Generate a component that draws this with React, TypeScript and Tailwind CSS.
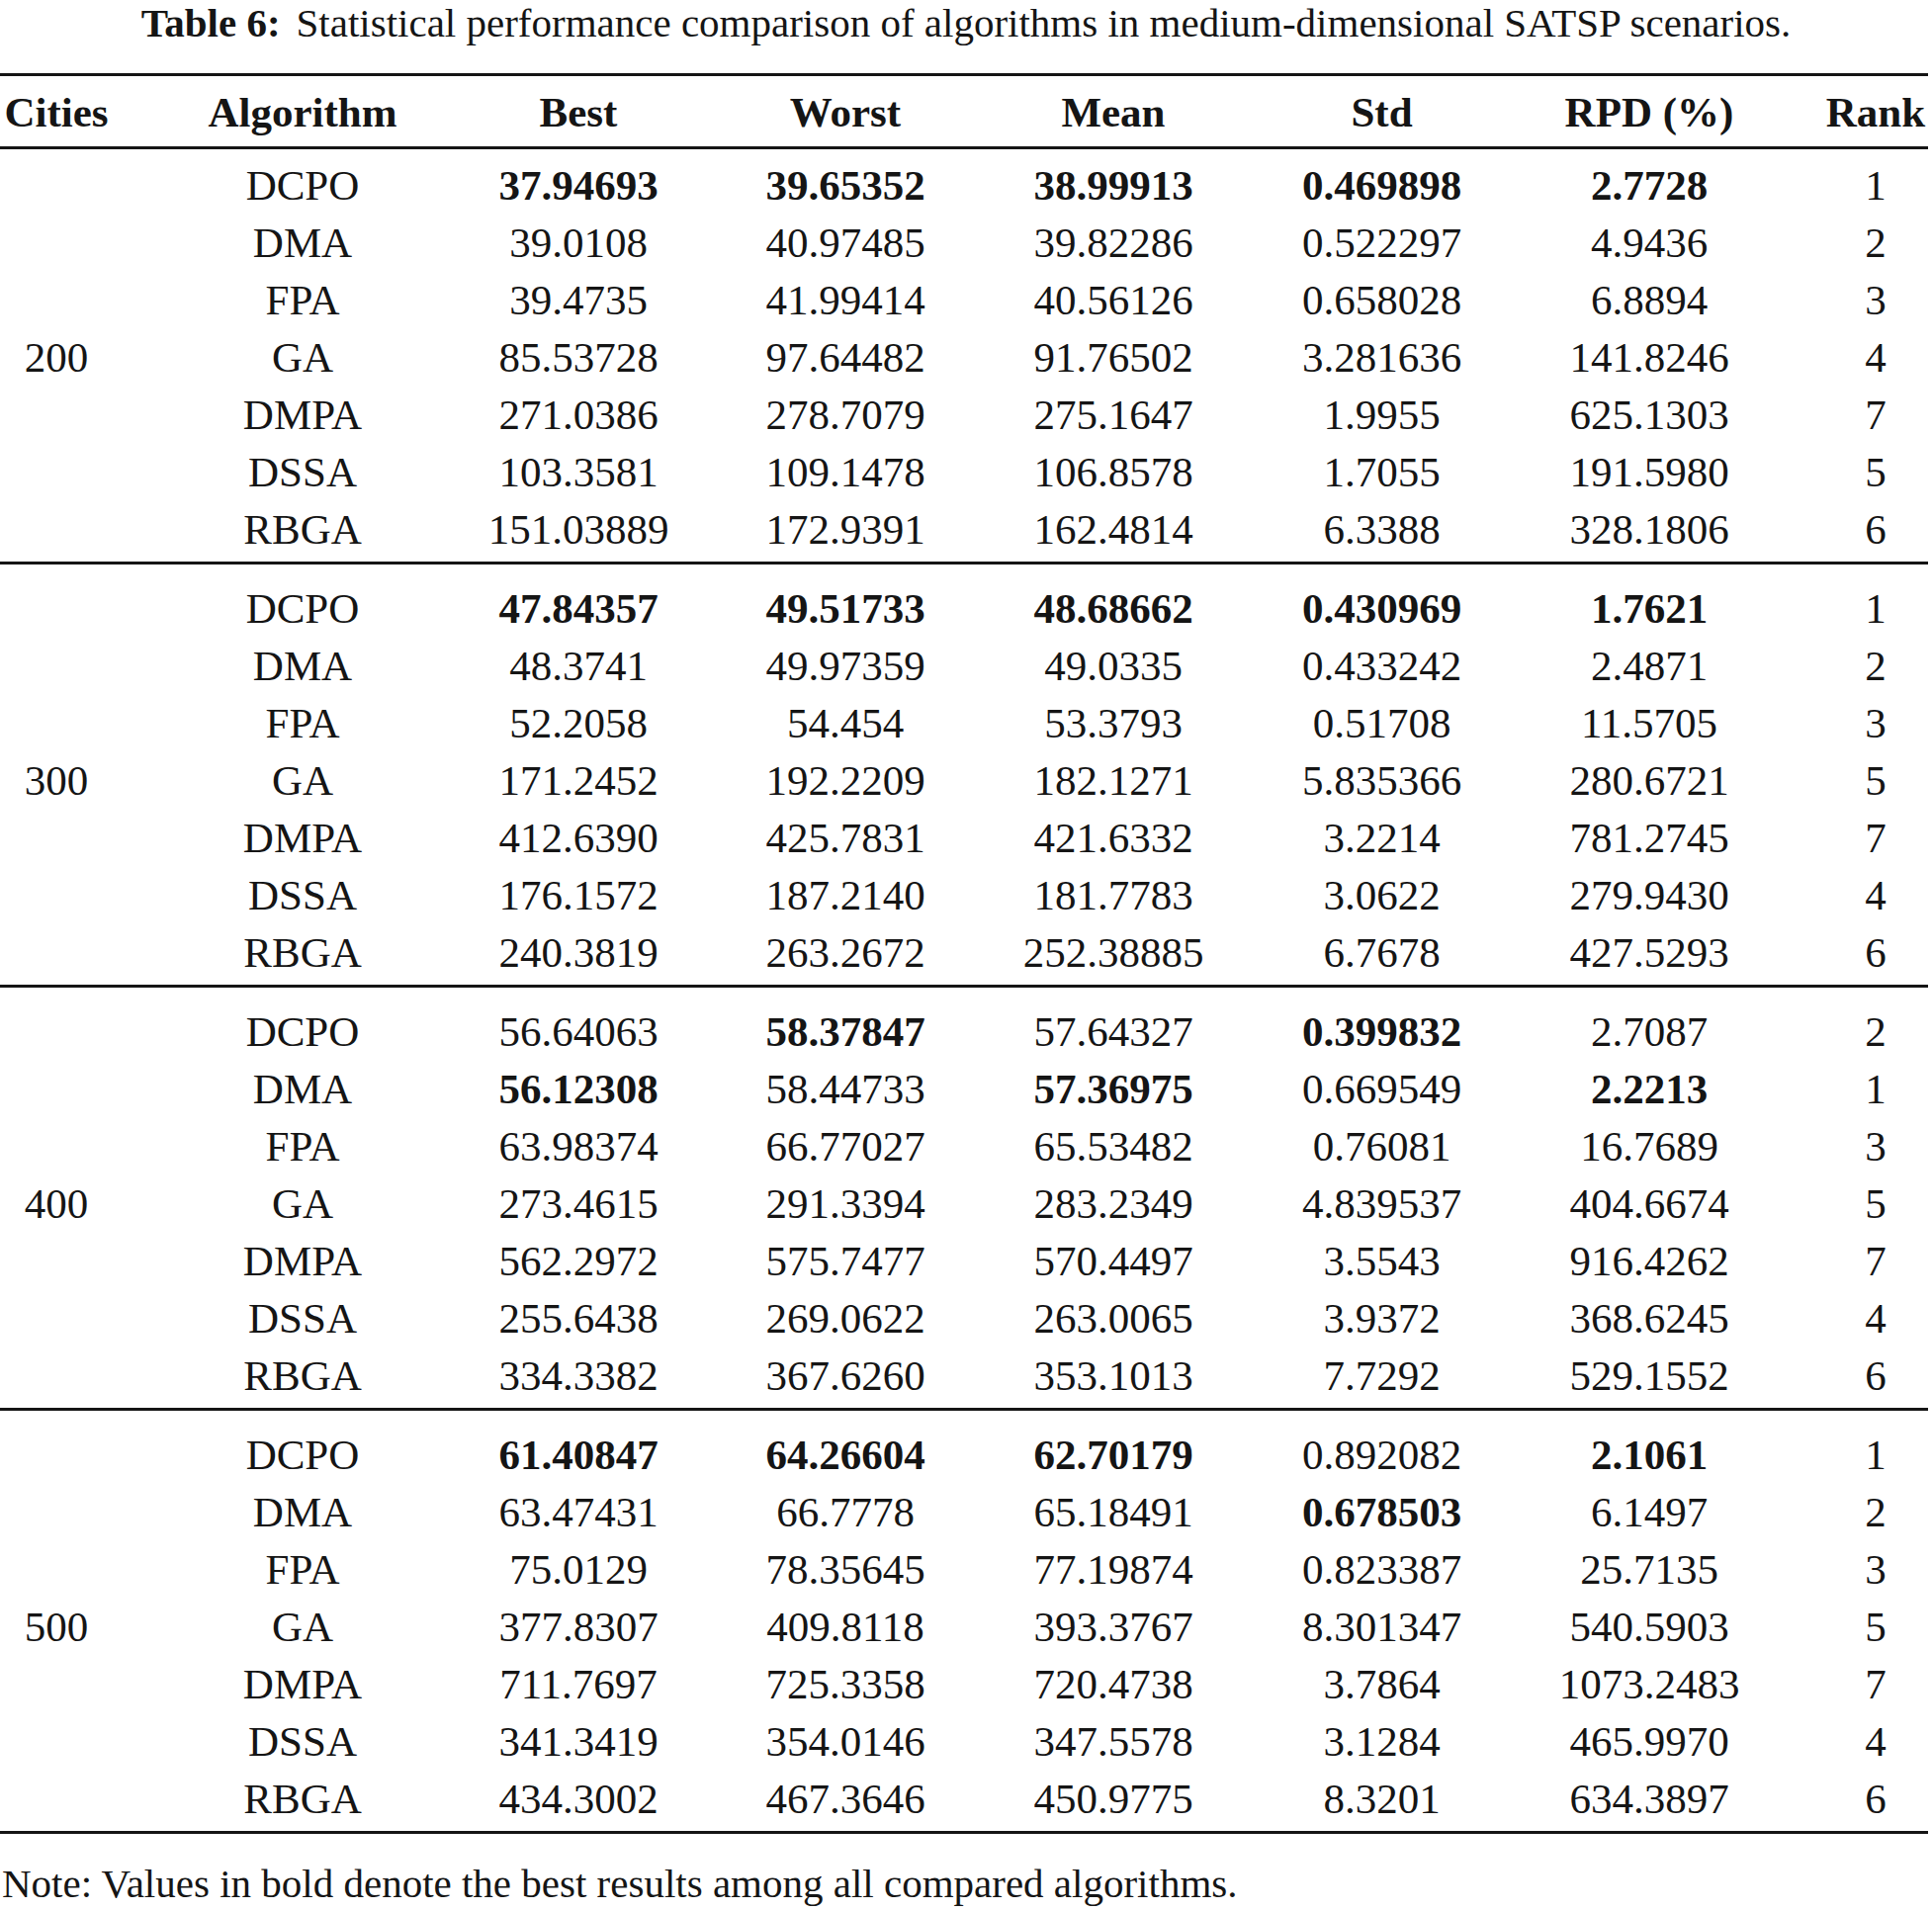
type Row = {
  alg: string
  vals: string[]
  rank: string
  bold?: number[]
}

type Group = {
  cities: string
  rows: Row[]
}

const groups: Group[] = [
  {
    cities: '200',
    rows: [
      { alg: 'DCPO', vals: ['37.94693', '39.65352', '38.99913', '0.469898', '2.7728'], rank: '1', bold: [0, 1, 2, 3, 4] },
      { alg: 'DMA', vals: ['39.0108', '40.97485', '39.82286', '0.522297', '4.9436'], rank: '2' },
      { alg: 'FPA', vals: ['39.4735', '41.99414', '40.56126', '0.658028', '6.8894'], rank: '3' },
      { alg: 'GA', vals: ['85.53728', '97.64482', '91.76502', '3.281636', '141.8246'], rank: '4' },
      { alg: 'DMPA', vals: ['271.0386', '278.7079', '275.1647', '1.9955', '625.1303'], rank: '7' },
      { alg: 'DSSA', vals: ['103.3581', '109.1478', '106.8578', '1.7055', '191.5980'], rank: '5' },
      { alg: 'RBGA', vals: ['151.03889', '172.9391', '162.4814', '6.3388', '328.1806'], rank: '6' },
    ],
  },
  {
    cities: '300',
    rows: [
      { alg: 'DCPO', vals: ['47.84357', '49.51733', '48.68662', '0.430969', '1.7621'], rank: '1', bold: [0, 1, 2, 3, 4] },
      { alg: 'DMA', vals: ['48.3741', '49.97359', '49.0335', '0.433242', '2.4871'], rank: '2' },
      { alg: 'FPA', vals: ['52.2058', '54.454', '53.3793', '0.51708', '11.5705'], rank: '3' },
      { alg: 'GA', vals: ['171.2452', '192.2209', '182.1271', '5.835366', '280.6721'], rank: '5' },
      { alg: 'DMPA', vals: ['412.6390', '425.7831', '421.6332', '3.2214', '781.2745'], rank: '7' },
      { alg: 'DSSA', vals: ['176.1572', '187.2140', '181.7783', '3.0622', '279.9430'], rank: '4' },
      { alg: 'RBGA', vals: ['240.3819', '263.2672', '252.38885', '6.7678', '427.5293'], rank: '6' },
    ],
  },
  {
    cities: '400',
    rows: [
      { alg: 'DCPO', vals: ['56.64063', '58.37847', '57.64327', '0.399832', '2.7087'], rank: '2', bold: [1, 3] },
      { alg: 'DMA', vals: ['56.12308', '58.44733', '57.36975', '0.669549', '2.2213'], rank: '1', bold: [0, 2, 4] },
      { alg: 'FPA', vals: ['63.98374', '66.77027', '65.53482', '0.76081', '16.7689'], rank: '3' },
      { alg: 'GA', vals: ['273.4615', '291.3394', '283.2349', '4.839537', '404.6674'], rank: '5' },
      { alg: 'DMPA', vals: ['562.2972', '575.7477', '570.4497', '3.5543', '916.4262'], rank: '7' },
      { alg: 'DSSA', vals: ['255.6438', '269.0622', '263.0065', '3.9372', '368.6245'], rank: '4' },
      { alg: 'RBGA', vals: ['334.3382', '367.6260', '353.1013', '7.7292', '529.1552'], rank: '6' },
    ],
  },
  {
    cities: '500',
    rows: [
      { alg: 'DCPO', vals: ['61.40847', '64.26604', '62.70179', '0.892082', '2.1061'], rank: '1', bold: [0, 1, 2, 4] },
      { alg: 'DMA', vals: ['63.47431', '66.7778', '65.18491', '0.678503', '6.1497'], rank: '2', bold: [3] },
      { alg: 'FPA', vals: ['75.0129', '78.35645', '77.19874', '0.823387', '25.7135'], rank: '3' },
      { alg: 'GA', vals: ['377.8307', '409.8118', '393.3767', '8.301347', '540.5903'], rank: '5' },
      { alg: 'DMPA', vals: ['711.7697', '725.3358', '720.4738', '3.7864', '1073.2483'], rank: '7' },
      { alg: 'DSSA', vals: ['341.3419', '354.0146', '347.5578', '3.1284', '465.9970'], rank: '4' },
      { alg: 'RBGA', vals: ['434.3002', '467.3646', '450.9775', '8.3201', '634.3897'], rank: '6' },
    ],
  },
]

const headers = ['Best', 'Worst', 'Mean', 'Std', 'RPD (%)']

const gridCols = 'grid grid-cols-[114px_336px_270px_270px_272px_271px_270px_1fr]'

const App = () => {
  return (
    <div className="min-h-screen w-[1954px] bg-white text-[#151515] font-['Liberation_Serif',serif]">
      <p className="h-[46px] text-center text-[41px] leading-[46px] whitespace-nowrap">
        <span className="font-bold">Table 6:</span>
        <span className="ml-[16px]">Statistical performance comparison of algorithms in medium-dimensional SATSP scenarios.</span>
      </p>

      <div className="mt-[28px] w-[1950px] border-t-[3px] border-b-[3px] border-[#151515]">
        <div className={`${gridCols} pt-[8px] pb-[5px] border-b-[3px] border-[#151515] text-[43px] leading-[58px] font-bold`}>
          <div className="flex justify-center">Cities</div>
          <div className="flex justify-center pl-[48px]">Algorithm</div>
          {headers.map((h) => (
            <div key={h} className="flex justify-center">{h}</div>
          ))}
          <div className="flex justify-center pl-[41px]">Rank</div>
        </div>

        {groups.map((g, gi) => (
          <div
            key={g.cities}
            className={`${gi === 0 ? 'pt-[8px]' : 'pt-[16px]'} pb-[3px] ${gi < groups.length - 1 ? 'border-b-[3px] border-[#151515]' : ''}`}
          >
            {g.rows.map((r, ri) => (
              <div key={r.alg} className={`${gridCols} h-[58px] text-[43px] leading-[58px]`}>
                <div className="flex justify-center">{ri === 3 ? g.cities : ''}</div>
                <div className="flex justify-center pl-[48px]">{r.alg}</div>
                {r.vals.map((v, vi) => (
                  <div key={vi} className={`flex justify-center whitespace-nowrap ${r.bold?.includes(vi) ? 'font-bold' : ''}`}>
                    {v}
                  </div>
                ))}
                <div className="flex justify-center pl-[41px]">{r.rank}</div>
              </div>
            ))}
          </div>
        ))}
      </div>

      <p className="mt-[30px] pl-[2px] text-[41px] leading-[40px] whitespace-nowrap">
        Note: Values in bold denote the best results among all compared algorithms.
      </p>
    </div>
  )
}

export default App
